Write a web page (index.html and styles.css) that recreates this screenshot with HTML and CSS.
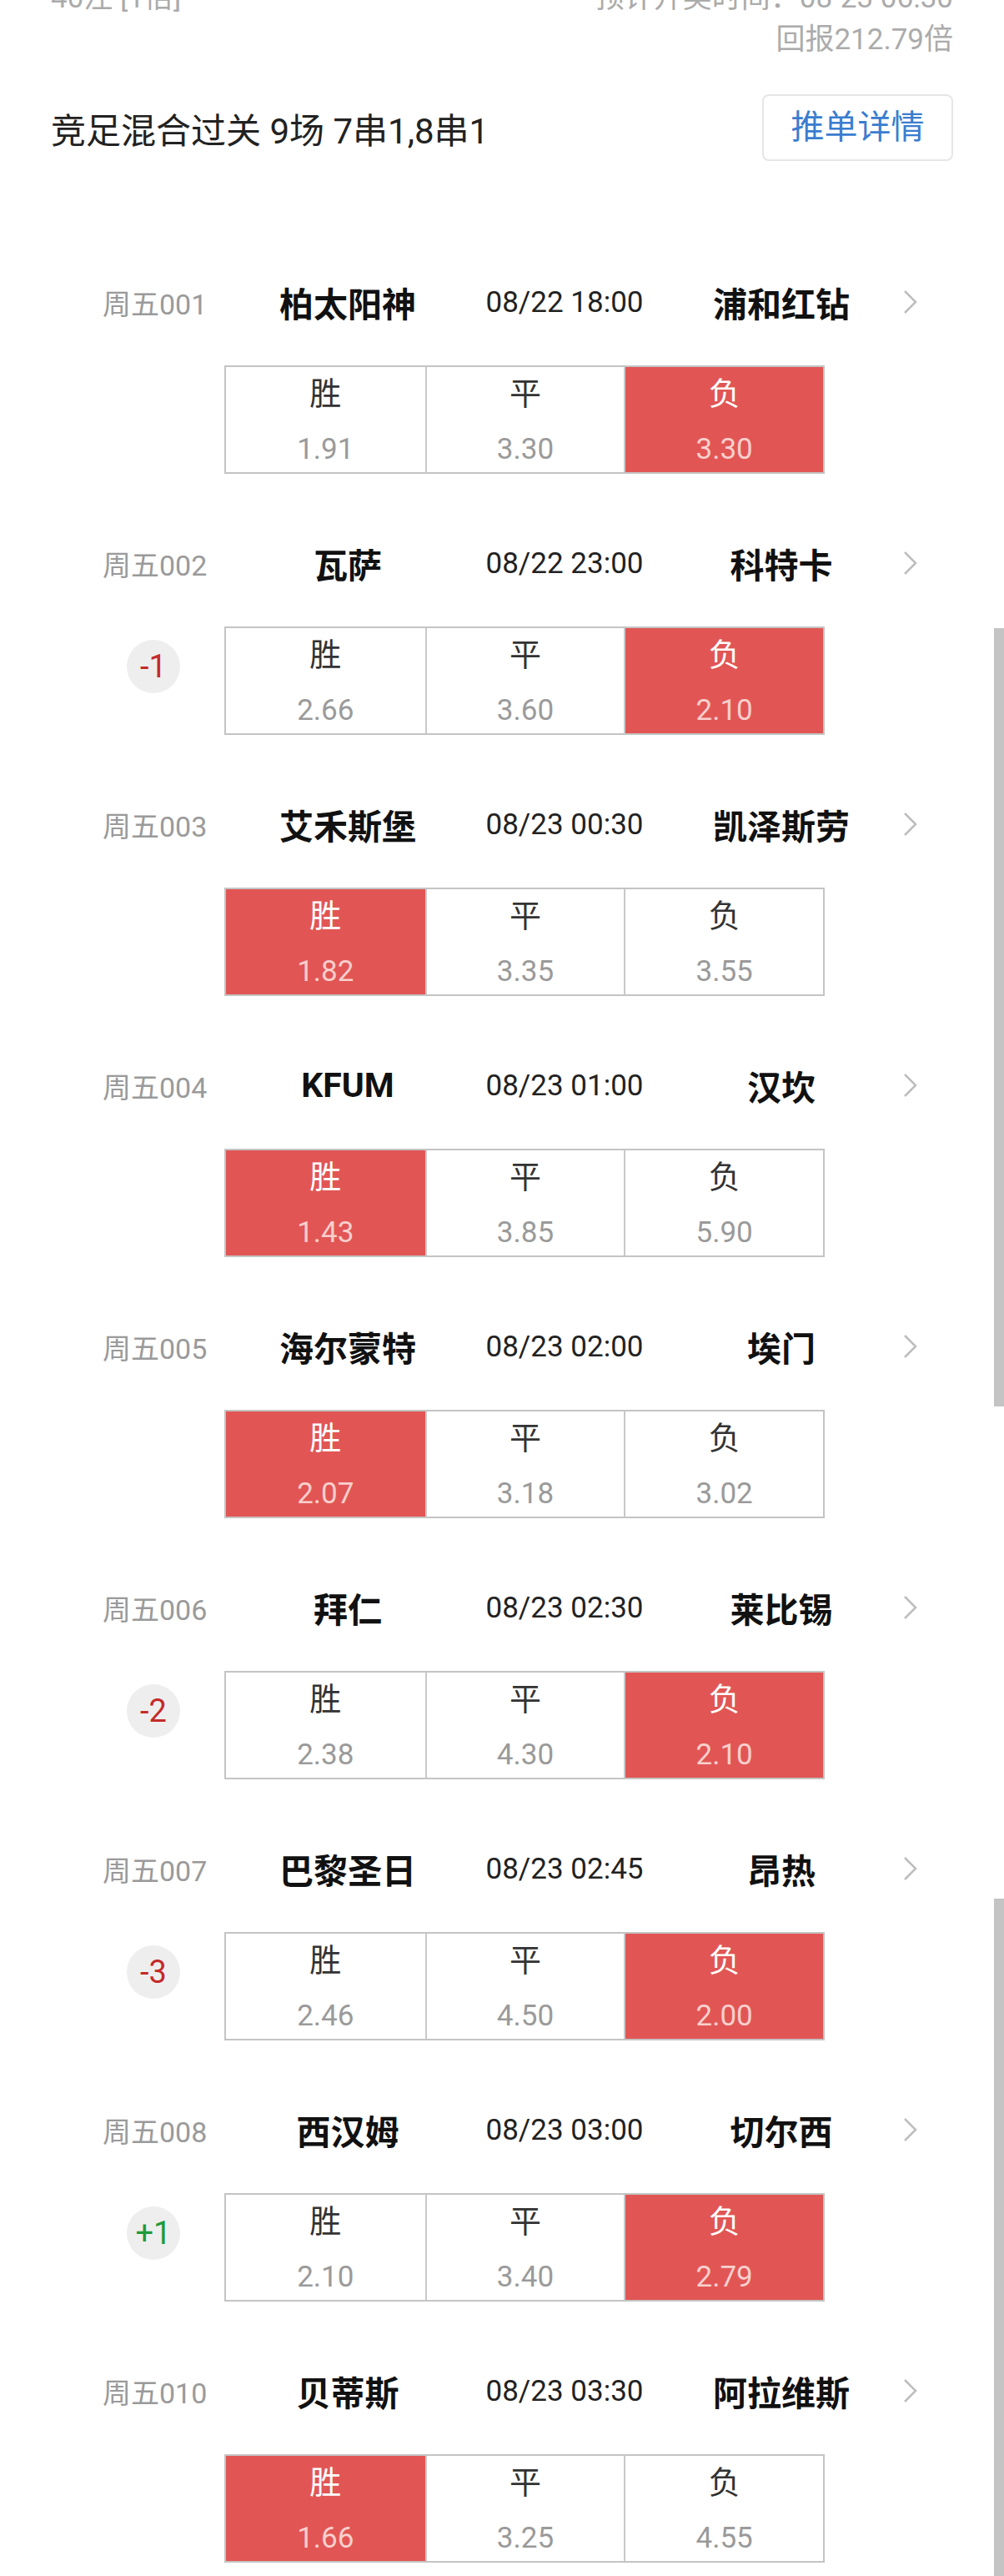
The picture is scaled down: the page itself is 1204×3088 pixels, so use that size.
FILE: index.html
```html
<!DOCTYPE html>
<html>
<head>
    <meta charset="utf-8">
    <title>竞足混合过关</title>
    <link rel="stylesheet" href="styles.css">
</head>
<body>
    <div class="top">
        <div class="top-line">
            <span>40注 [1倍]</span>
            <span>预计开奖时间：08-23 06:30</span>
        </div>
        <div class="top-line">
            <span></span>
            <span>回报212.79倍</span>
        </div>
    </div>

    <div class="title-bar">
        <h1>竞足混合过关 9场 7串1,8串1</h1>
        <div class="detail-btn">推单详情</div>
    </div>

    <div class="matches">
        <div class="match">
            <div class="match-head">
                <span class="code">周五001</span>
                <span class="team">柏太阳神</span>
                <span class="time">08/22 18:00</span>
                <span class="team">浦和红钻</span>
                <svg class="arrow" width="17" height="30" viewBox="0 0 17 30"><polyline points="2,2 15,15 2,28" fill="none" stroke="#bdbdbd" stroke-width="2.5"/></svg>
            </div>
            <div class="odds-row">
                <div></div>
                <div class="odds">
                    <div class="cell"><b>胜</b><i>1.91</i></div>
                    <div class="cell"><b>平</b><i>3.30</i></div>
                    <div class="cell on"><b>负</b><i>3.30</i></div>
                </div>
            </div>
        </div>

        <div class="match">
            <div class="match-head">
                <span class="code">周五002</span>
                <span class="team">瓦萨</span>
                <span class="time">08/22 23:00</span>
                <span class="team">科特卡</span>
                <svg class="arrow" width="17" height="30" viewBox="0 0 17 30"><polyline points="2,2 15,15 2,28" fill="none" stroke="#bdbdbd" stroke-width="2.5"/></svg>
            </div>
            <div class="odds-row">
                <div class="badge minus">-1</div>
                <div class="odds">
                    <div class="cell"><b>胜</b><i>2.66</i></div>
                    <div class="cell"><b>平</b><i>3.60</i></div>
                    <div class="cell on"><b>负</b><i>2.10</i></div>
                </div>
            </div>
        </div>

        <div class="match">
            <div class="match-head">
                <span class="code">周五003</span>
                <span class="team">艾禾斯堡</span>
                <span class="time">08/23 00:30</span>
                <span class="team">凯泽斯劳</span>
                <svg class="arrow" width="17" height="30" viewBox="0 0 17 30"><polyline points="2,2 15,15 2,28" fill="none" stroke="#bdbdbd" stroke-width="2.5"/></svg>
            </div>
            <div class="odds-row">
                <div></div>
                <div class="odds">
                    <div class="cell on"><b>胜</b><i>1.82</i></div>
                    <div class="cell"><b>平</b><i>3.35</i></div>
                    <div class="cell"><b>负</b><i>3.55</i></div>
                </div>
            </div>
        </div>

        <div class="match">
            <div class="match-head">
                <span class="code">周五004</span>
                <span class="team">KFUM</span>
                <span class="time">08/23 01:00</span>
                <span class="team">汉坎</span>
                <svg class="arrow" width="17" height="30" viewBox="0 0 17 30"><polyline points="2,2 15,15 2,28" fill="none" stroke="#bdbdbd" stroke-width="2.5"/></svg>
            </div>
            <div class="odds-row">
                <div></div>
                <div class="odds">
                    <div class="cell on"><b>胜</b><i>1.43</i></div>
                    <div class="cell"><b>平</b><i>3.85</i></div>
                    <div class="cell"><b>负</b><i>5.90</i></div>
                </div>
            </div>
        </div>

        <div class="match">
            <div class="match-head">
                <span class="code">周五005</span>
                <span class="team">海尔蒙特</span>
                <span class="time">08/23 02:00</span>
                <span class="team">埃门</span>
                <svg class="arrow" width="17" height="30" viewBox="0 0 17 30"><polyline points="2,2 15,15 2,28" fill="none" stroke="#bdbdbd" stroke-width="2.5"/></svg>
            </div>
            <div class="odds-row">
                <div></div>
                <div class="odds">
                    <div class="cell on"><b>胜</b><i>2.07</i></div>
                    <div class="cell"><b>平</b><i>3.18</i></div>
                    <div class="cell"><b>负</b><i>3.02</i></div>
                </div>
            </div>
        </div>

        <div class="match">
            <div class="match-head">
                <span class="code">周五006</span>
                <span class="team">拜仁</span>
                <span class="time">08/23 02:30</span>
                <span class="team">莱比锡</span>
                <svg class="arrow" width="17" height="30" viewBox="0 0 17 30"><polyline points="2,2 15,15 2,28" fill="none" stroke="#bdbdbd" stroke-width="2.5"/></svg>
            </div>
            <div class="odds-row">
                <div class="badge minus">-2</div>
                <div class="odds">
                    <div class="cell"><b>胜</b><i>2.38</i></div>
                    <div class="cell"><b>平</b><i>4.30</i></div>
                    <div class="cell on"><b>负</b><i>2.10</i></div>
                </div>
            </div>
        </div>

        <div class="match">
            <div class="match-head">
                <span class="code">周五007</span>
                <span class="team">巴黎圣日</span>
                <span class="time">08/23 02:45</span>
                <span class="team">昂热</span>
                <svg class="arrow" width="17" height="30" viewBox="0 0 17 30"><polyline points="2,2 15,15 2,28" fill="none" stroke="#bdbdbd" stroke-width="2.5"/></svg>
            </div>
            <div class="odds-row">
                <div class="badge minus">-3</div>
                <div class="odds">
                    <div class="cell"><b>胜</b><i>2.46</i></div>
                    <div class="cell"><b>平</b><i>4.50</i></div>
                    <div class="cell on"><b>负</b><i>2.00</i></div>
                </div>
            </div>
        </div>

        <div class="match">
            <div class="match-head">
                <span class="code">周五008</span>
                <span class="team">西汉姆</span>
                <span class="time">08/23 03:00</span>
                <span class="team">切尔西</span>
                <svg class="arrow" width="17" height="30" viewBox="0 0 17 30"><polyline points="2,2 15,15 2,28" fill="none" stroke="#bdbdbd" stroke-width="2.5"/></svg>
            </div>
            <div class="odds-row">
                <div class="badge plus">+1</div>
                <div class="odds">
                    <div class="cell"><b>胜</b><i>2.10</i></div>
                    <div class="cell"><b>平</b><i>3.40</i></div>
                    <div class="cell on"><b>负</b><i>2.79</i></div>
                </div>
            </div>
        </div>

        <div class="match">
            <div class="match-head">
                <span class="code">周五010</span>
                <span class="team">贝蒂斯</span>
                <span class="time">08/23 03:30</span>
                <span class="team">阿拉维斯</span>
                <svg class="arrow" width="17" height="30" viewBox="0 0 17 30"><polyline points="2,2 15,15 2,28" fill="none" stroke="#bdbdbd" stroke-width="2.5"/></svg>
            </div>
            <div class="odds-row">
                <div></div>
                <div class="odds">
                    <div class="cell on"><b>胜</b><i>1.66</i></div>
                    <div class="cell"><b>平</b><i>3.25</i></div>
                    <div class="cell"><b>负</b><i>4.55</i></div>
                </div>
            </div>
        </div>
    </div>

    <div class="scroll scroll-a"></div>
    <div class="scroll scroll-b"></div>
</body>
</html>
```

FILE: styles.css
```css
body { margin: 0; background: #fff; font-family: Roboto, "Noto Sans CJK SC", sans-serif; position: relative; min-height: 3088px; overflow: hidden; }

.top { margin-top: -27px; padding: 0 61px; color: #ababab; font-size: 35px; }
.top-line { display: flex; justify-content: space-between; height: 50px; line-height: 50px; }

.title-bar { display: flex; justify-content: space-between; align-items: center; height: 80px; margin-top: 40px; padding: 0 61px; }
.title-bar h1 { margin: 0; font-size: 42px; font-weight: 400; color: #222; }
.detail-btn { width: 225px; height: 76px; line-height: 76px; text-align: center; border: 2px solid #e6e6e6; border-radius: 8px; color: #3a7dcf; font-size: 40px; }

.matches { margin-top: 129px; }
.match { height: 313px; }
.match-head { display: flex; align-items: center; height: 80px; }
.code { width: 287px; padding-left: 123px; box-sizing: border-box; white-space: nowrap; font-size: 34px; color: #9a9a9a; }
.team { width: 260px; text-align: center; white-space: nowrap; font-size: 41px; font-weight: 700; color: #111; }
.time { width: 260px; text-align: center; white-space: nowrap; font-size: 35px; color: #222; }
.arrow { margin-left: 16px; }

.odds-row { display: grid; grid-template-columns: 269px 720px; margin-top: 36px; }
.badge { width: 64px; height: 64px; margin: 16px 0 0 152px; border-radius: 50%; background: #eeeeee; text-align: center; line-height: 64px; font-size: 38px; }
.badge.minus { color: #c42a2a; }
.badge.plus { color: #1f9a3b; }

.odds { display: grid; grid-template-columns: repeat(3, 1fr); height: 130px; border: 2px solid #c4c4c4; box-sizing: border-box; }
.cell { display: flex; flex-direction: column; align-items: center; padding-top: 10px; }
.cell + .cell { border-left: 2px solid #c9c9c9; }
.cell b { font-weight: 400; font-size: 38px; line-height: 44px; color: #333; }
.cell i { font-style: normal; font-size: 35px; line-height: 44px; margin-top: 23px; color: #9a9a9a; }
.cell.on { background: #e15654; }
.cell.on b { color: #fff; }
.cell.on i { color: #f9cfcd; }

.scroll { position: absolute; right: 0; width: 12px; background: #c4c4c4; }
.scroll-a { top: 753px; height: 933px; }
.scroll-b { top: 2276px; height: 812px; }
```
